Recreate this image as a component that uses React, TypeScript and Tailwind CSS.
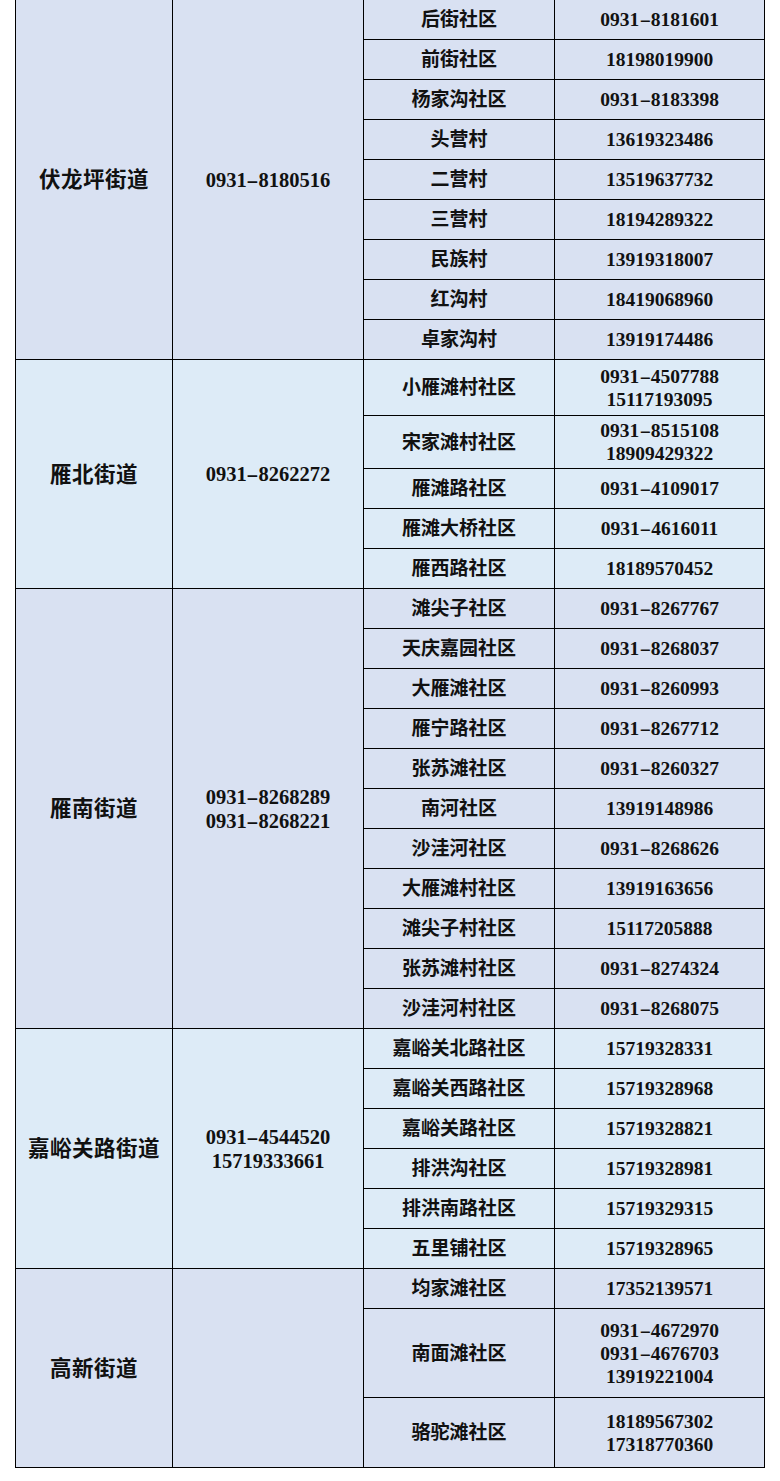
type Row = { name: string; phones: string[]; h: number };
type Group = { street: string; phones: string[]; bg: string; rows: Row[] };

const GROUPS: Group[] = [
  {
    street: "伏龙坪街道",
    phones: ["0931-8180516"],
    bg: "bg-[#d9e1f2]",
    rows: [
      { name: "后街社区", phones: ["0931-8181601"], h: 40 },
      { name: "前街社区", phones: ["18198019900"], h: 40 },
      { name: "杨家沟社区", phones: ["0931-8183398"], h: 40 },
      { name: "头营村", phones: ["13619323486"], h: 40 },
      { name: "二营村", phones: ["13519637732"], h: 40 },
      { name: "三营村", phones: ["18194289322"], h: 40 },
      { name: "民族村", phones: ["13919318007"], h: 40 },
      { name: "红沟村", phones: ["18419068960"], h: 40 },
      { name: "卓家沟村", phones: ["13919174486"], h: 40 },
    ],
  },
  {
    street: "雁北街道",
    phones: ["0931-8262272"],
    bg: "bg-[#ddebf7]",
    rows: [
      { name: "小雁滩村社区", phones: ["0931-4507788", "15117193095"], h: 56 },
      { name: "宋家滩村社区", phones: ["0931-8515108", "18909429322"], h: 53 },
      { name: "雁滩路社区", phones: ["0931-4109017"], h: 40 },
      { name: "雁滩大桥社区", phones: ["0931-4616011"], h: 40 },
      { name: "雁西路社区", phones: ["18189570452"], h: 40 },
    ],
  },
  {
    street: "雁南街道",
    phones: ["0931-8268289", "0931-8268221"],
    bg: "bg-[#d9e1f2]",
    rows: [
      { name: "滩尖子社区", phones: ["0931-8267767"], h: 40 },
      { name: "天庆嘉园社区", phones: ["0931-8268037"], h: 40 },
      { name: "大雁滩社区", phones: ["0931-8260993"], h: 40 },
      { name: "雁宁路社区", phones: ["0931-8267712"], h: 40 },
      { name: "张苏滩社区", phones: ["0931-8260327"], h: 40 },
      { name: "南河社区", phones: ["13919148986"], h: 40 },
      { name: "沙洼河社区", phones: ["0931-8268626"], h: 40 },
      { name: "大雁滩村社区", phones: ["13919163656"], h: 40 },
      { name: "滩尖子村社区", phones: ["15117205888"], h: 40 },
      { name: "张苏滩村社区", phones: ["0931-8274324"], h: 40 },
      { name: "沙洼河村社区", phones: ["0931-8268075"], h: 40 },
    ],
  },
  {
    street: "嘉峪关路街道",
    phones: ["0931-4544520", "15719333661"],
    bg: "bg-[#ddebf7]",
    rows: [
      { name: "嘉峪关北路社区", phones: ["15719328331"], h: 40 },
      { name: "嘉峪关西路社区", phones: ["15719328968"], h: 40 },
      { name: "嘉峪关路社区", phones: ["15719328821"], h: 40 },
      { name: "排洪沟社区", phones: ["15719328981"], h: 40 },
      { name: "排洪南路社区", phones: ["15719329315"], h: 40 },
      { name: "五里铺社区", phones: ["15719328965"], h: 40 },
    ],
  },
  {
    street: "高新街道",
    phones: [],
    bg: "bg-[#d9e1f2]",
    rows: [
      { name: "均家滩社区", phones: ["17352139571"], h: 40 },
      { name: "南面滩社区", phones: ["0931-4672970", "0931-4676703", "13919221004"], h: 89 },
      { name: "骆驼滩社区", phones: ["18189567302", "17318770360"], h: 70 },
    ],
  },
];

// the dash in the source is drawn wider than a plain hyphen
function Phone({ value }: { value: string }) {
  const [a, b] = value.split("-");
  if (b === undefined) return <div>{value}</div>;
  return (
    <div>
      {a}
      <span className="mx-[2.5px] inline-block scale-x-[1.8]">-</span>
      {b}
    </div>
  );
}

const cell = "border-[1.5px] border-black text-center align-middle p-0";

export default function App() {
  return (
    <div className="min-h-[1481px] w-[780px] bg-white pl-[15px] font-['Liberation_Serif','Noto_Sans_CJK_SC',serif] font-bold text-[#111]">
      <table className="-mt-[1px] w-[749px] table-fixed border-collapse">
        <colgroup>
          <col className="w-[157px]" />
          <col className="w-[191px]" />
          <col className="w-[191px]" />
          <col className="w-[210px]" />
        </colgroup>
        <tbody>
          {GROUPS.map((g) =>
            g.rows.map((r, i) => (
              <tr key={g.street + r.name} className={g.bg} style={{ height: r.h }}>
                {i === 0 && (
                  <>
                    <td rowSpan={g.rows.length} className={`${cell} pt-[2px] text-[21.5px] tracking-[0.5px]`}>
                      {g.street}
                    </td>
                    <td rowSpan={g.rows.length} className={`${cell} text-[20.5px] leading-[24px]`}>
                      {g.phones.map((p) => (
                        <Phone key={p} value={p} />
                      ))}
                    </td>
                  </>
                )}
                <td className={`${cell} pt-[2px] text-[19px]`}>{r.name}</td>
                <td className={`${cell} text-[19.5px] leading-[23px]`}>
                  {r.phones.map((p) => (
                    <Phone key={p} value={p} />
                  ))}
                </td>
              </tr>
            ))
          )}
        </tbody>
      </table>
    </div>
  );
}
